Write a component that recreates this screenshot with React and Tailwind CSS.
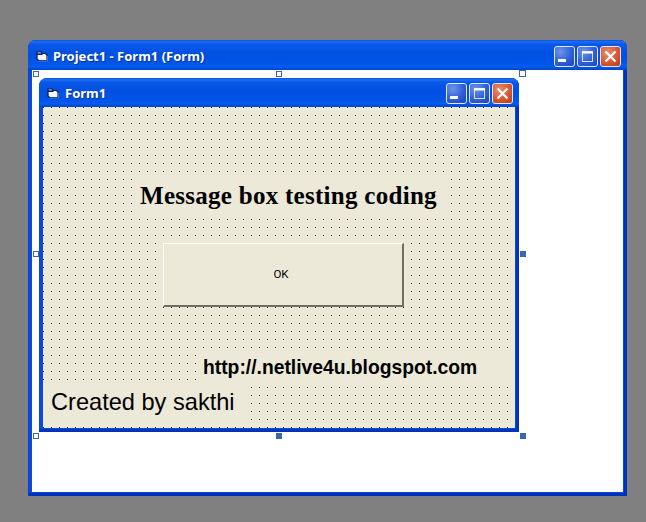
const FormIcon = ({ className }) => (
  <svg viewBox="0 0 12 11" className={className} aria-hidden="true">
    <path d="M1 1H5L6 2.5H9.5L11 4V9.5H2.5L1 8Z" fill="#f4f6fb" stroke="#0a1a50" strokeWidth="1.2" />
    <path d="M1 3.2H6.5" stroke="#0a1a50" strokeWidth="1.6" />
    <path d="M2.5 10H11.4V5" stroke="#6d88d4" strokeWidth="0.8" fill="none" />
  </svg>
);

const WinButton = ({ kind }) => {
  const isClose = kind === "close";
  return (
    <div
      className={
        "flex h-[21px] w-[21px] items-center justify-center rounded-[3px] border border-[#dfe8fb] " +
        (isClose
          ? "bg-[radial-gradient(circle_at_35%_30%,#e9906f,#d9572f_55%,#b8391a)]"
          : "bg-[radial-gradient(circle_at_30%_25%,#6f95ea,#2f5fd8_55%,#1c44bc)]")
      }
    >
      <svg viewBox="0 0 19 19" className="h-[19px] w-[19px]" aria-hidden="true">
        {kind === "min" && <rect x="3" y="12" width="8" height="3" fill="#fff" />}
        {kind === "max" && (
          <g fill="none" stroke="#fff">
            <rect x="4.5" y="4.5" width="10" height="10" strokeOpacity="0.8" />
            <path d="M4 5.5H15" strokeWidth="2" />
          </g>
        )}
        {isClose && <path d="M4.5 4.5L14.5 14.5M14.5 4.5L4.5 14.5" stroke="#fff" strokeWidth="2.2" />}
      </svg>
    </div>
  );
};

const TitleBar = ({ title, heightClass, iconGap, paddingClass }) => (
  <div
    className={
      "flex shrink-0 items-center rounded-t-[8px] bg-[linear-gradient(180deg,#0a4fe0_0%,#1f6ff0_6%,#0a58ea_14%,#0050e0_45%,#0054e8_75%,#065cf0_88%,#0045cc_100%)] text-[13px] " +
      heightClass + " " + paddingClass
    }
  >
    <FormIcon className="h-[11px] w-[12px] shrink-0" />
    <span className={"mt-[1px] font-['Noto_Sans','DejaVu_Sans',sans-serif] font-bold text-white [text-shadow:1px_1px_0_#0a2f9c] " + iconGap}>
      {title}
    </span>
    <div className="ml-auto flex gap-[2px]">
      <WinButton kind="min" />
      <WinButton kind="max" />
      <WinButton kind="close" />
    </div>
  </div>
);

const Handle = ({ className, filled }) => (
  <div
    className={
      "absolute h-[6px] w-[6px] border border-[#3c64b4] " +
      (filled ? "bg-[#3c64b4] " : "bg-white ") +
      className
    }
  />
);

const Label = ({ className, children }) => (
  <div className={"absolute flex items-center bg-[#ece9d8] text-black " + className}>{children}</div>
);

export default function App() {
  return (
    <div className="h-[522px] w-[646px] overflow-hidden bg-[#808080] pl-[28px] pt-[40px]">
      <div className="relative flex h-[456px] w-[599px] flex-col rounded-t-[8px] bg-[#0a48e0] shadow-[inset_1px_0_0_#0a3ccf,inset_-3px_0_0_#0032bc,inset_0_-3px_0_#0032bc]">
        <TitleBar
          title="Project1 - Form1 (Form)"
          heightClass="h-[30px]"
          paddingClass="pl-[8px] pr-[6px] pt-[3px]"
          iconGap="ml-[5px]"
        />
        <div className="mb-[4px] ml-[4px] mr-[4px] flex-1 bg-white pl-[7px] pt-[8px]">
          <div className="flex h-[354px] w-[480px] flex-col rounded-t-[8px] bg-[#0a48e0] shadow-[inset_-3px_0_0_#0032bc,inset_0_-3px_0_#0032bc]">
            <TitleBar
              title="Form1"
              heightClass="h-[29px]"
              paddingClass="pl-[8px] pr-[6px] pt-[2px]"
              iconGap="ml-[6px]"
            />
            <div className="relative mb-[4px] ml-[4px] mr-[4px] flex-1 bg-[#ece9d8] bg-[radial-gradient(circle_at_0.5px_0.5px,#222_0.5px,transparent_0.65px)] bg-[length:8px_8px]">
              <Label className="left-[92px] top-[69px] h-[40px] w-[314px] font-['Liberation_Serif',serif] text-[25px] font-bold tracking-[0.28px]">
                <span className="ml-[5px]">Message box testing coding</span>
              </Label>
              <button className="absolute left-[120px] top-[136px] flex h-[64px] w-[241px] items-center justify-center border-b-2 border-l border-r-2 border-t border-b-[#716f64] border-l-white border-r-[#716f64] border-t-white bg-[#ece9d8] pr-[4px] font-['Roboto',sans-serif] text-[11.5px] font-normal text-black">
                OK
              </button>
              <Label className="left-[157px] top-[243px] h-[36px] w-[315px] font-['Liberation_Sans',sans-serif] text-[19.3px] font-bold">
                <span className="ml-[3px]">http://.netlive4u.blogspot.com</span>
              </Label>
              <Label className="left-0 top-[274px] h-[44px] w-[205px] font-['Liberation_Sans',sans-serif] text-[23.6px]">
                <span className="ml-[8px]">Created by sakthi</span>
              </Label>
            </div>
          </div>
        </div>
        <Handle className="left-[5px] top-[31px]" />
        <Handle className="left-[248px] top-[31px]" />
        <Handle className="left-[491px] top-[30px] h-[7px] w-[7px]" />
        <Handle className="left-[5px] top-[211px]" />
        <Handle className="left-[492px] top-[211px]" filled />
        <Handle className="left-[5px] top-[393px]" />
        <Handle className="left-[248px] top-[393px]" filled />
        <Handle className="left-[492px] top-[393px]" filled />
      </div>
    </div>
  );
}
